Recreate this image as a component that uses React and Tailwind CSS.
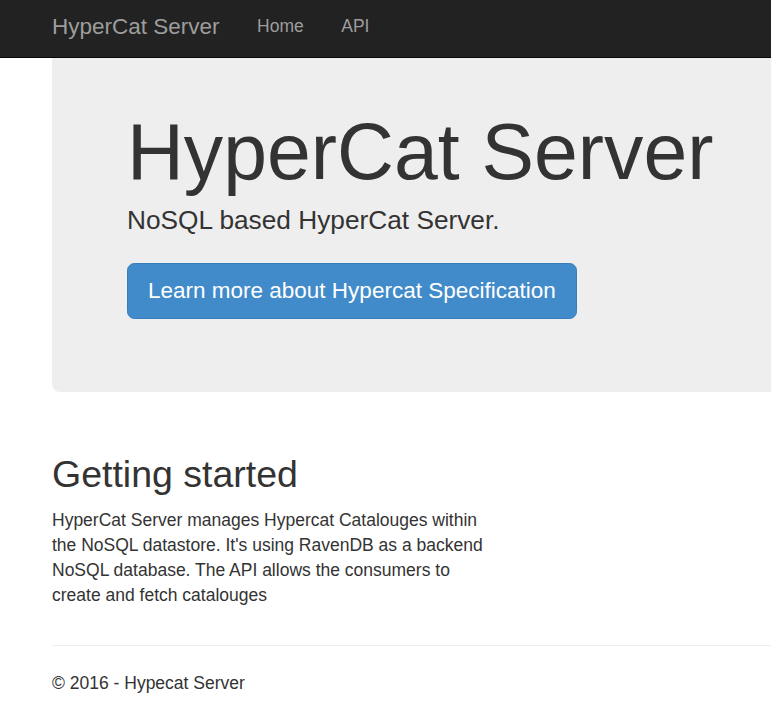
export default function App() {
  return (
    <div
      className="min-h-screen bg-white text-[#333] overflow-x-hidden"
      style={{ fontFamily: '"Liberation Sans", Arial, sans-serif' }}
    >
      <nav className="h-[58px] bg-[#222] border-b border-[#080808]">
        <div className="flex items-center h-full pl-[52px] pb-[4px]">
          <a className="text-[22.5px] leading-[25px] text-[#9d9d9d] pr-[18.75px]">
            HyperCat Server
          </a>
          <ul className="flex">
            <li>
              <a className="block px-[18.75px] text-[17.5px] leading-[25px] text-[#9d9d9d]">
                Home
              </a>
            </li>
            <li>
              <a className="block px-[18.75px] text-[17.5px] leading-[25px] text-[#9d9d9d]">
                API
              </a>
            </li>
          </ul>
        </div>
      </nav>

      <div className="pl-[52px]">
        <div className="bg-[#eee] rounded-bl-[8px] pl-[75px] pt-[51px] pb-[73px]">
          <h1 className="text-[78.75px] leading-[86.6px] font-normal">
            HyperCat Server
          </h1>
          <p className="mt-[6px] text-[26.25px] leading-[36.75px] font-normal">
            NoSQL based HyperCat Server.
          </p>
          <a className="inline-block mt-[25px] px-[20px] py-[12px] text-[22.5px] leading-[30px] text-white bg-[#428bca] border border-[#357ebd] rounded-[7.5px]">
            Learn more about Hypercat Specification
          </a>
        </div>

        <div className="mt-[62px]">
          <h2 className="text-[37.5px] leading-[41.25px] font-normal">
            Getting started
          </h2>
          <p className="mt-[12px] w-[440px] text-[17.5px] leading-[25px]">
            HyperCat Server manages Hypercat Catalouges within the NoSQL
            datastore. It's using RavenDB as a backend NoSQL database. The API
            allows the consumers to create and fetch catalouges
          </p>
        </div>

        <hr className="mt-[37px] border-0 border-t border-[#eee]" />
        <footer className="mt-[25px]">
          <p className="text-[17.5px] leading-[25px]">© 2016 - Hypecat Server</p>
        </footer>
      </div>
    </div>
  );
}
